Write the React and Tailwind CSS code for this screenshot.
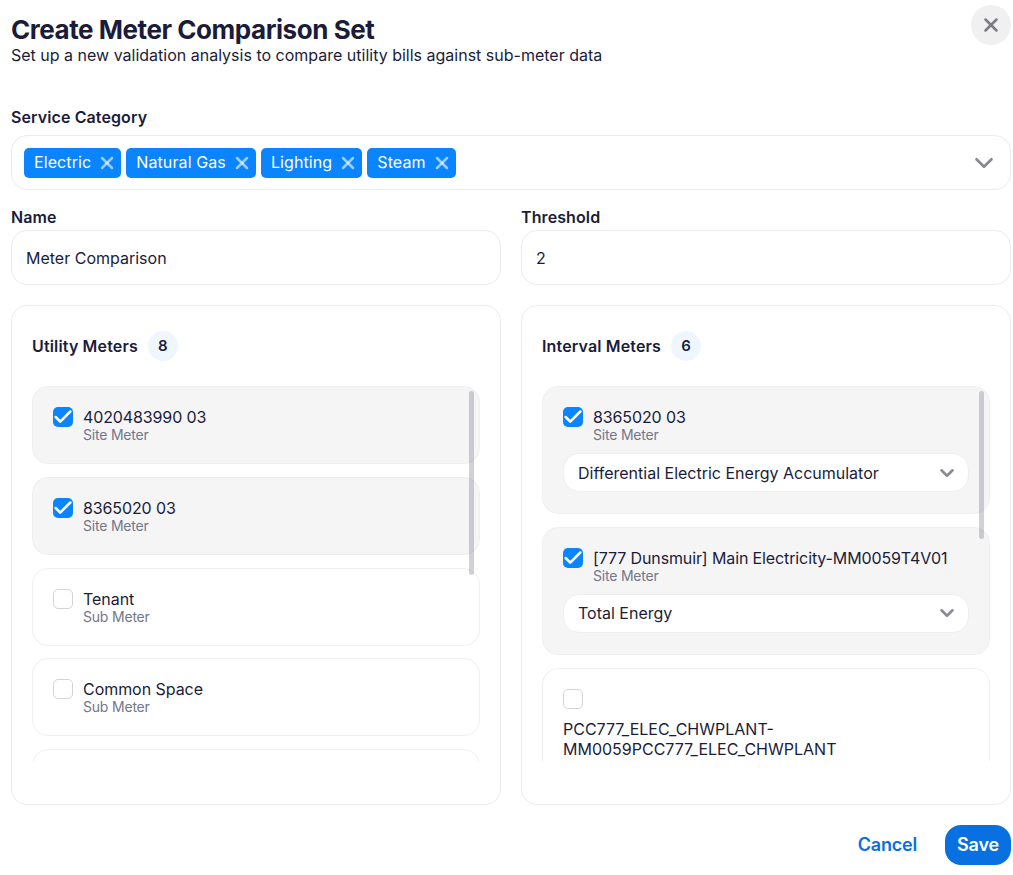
import { X, ChevronDown, Check } from 'lucide-react';

const utilityMeters = [
  { id: 'u1', name: '4020483990 03', type: 'Site Meter', checked: true, numeric: true },
  { id: 'u2', name: '8365020 03', type: 'Site Meter', checked: true, numeric: true },
  { id: 'u3', name: 'Tenant', type: 'Sub Meter' },
  { id: 'u4', name: 'Common Space', type: 'Sub Meter' },
  { id: 'u5', name: '', type: '' },
];

const intervalMeters = [
  { id: 'i1', name: '8365020 03', type: 'Site Meter', checked: true, numeric: true, point: 'Differential Electric Energy Accumulator' },
  { id: 'i2', name: '[777 Dunsmuir] Main Electricity-MM0059T4V01', type: 'Site Meter', checked: true, numeric: true, point: 'Total Energy' },
];

const tags = ['Electric', 'Natural Gas', 'Lighting', 'Steam'];

function Checkbox({ checked }) {
  if (checked) {
    return (
      <span className="flex h-5 w-5 shrink-0 items-center justify-center rounded-[5px] bg-[#0a84ff]">
        <Check className="h-[22px] w-[22px] shrink-0 text-white" strokeWidth={2.8} />
      </span>
    );
  }
  return <span className="block h-5 w-5 shrink-0 rounded-[5px] border border-[#d4d4d8] bg-white" />;
}

function MeterCard({ meter }) {
  return (
    <div className={`rounded-2xl border px-5 pt-5 pb-5 ${meter.checked ? 'border-[#efefef] bg-[#f5f5f5]' : 'border-[#efefef] bg-white'}`}>
      <div className="flex gap-[10px]">
        <Checkbox checked={meter.checked} />
        <div className="min-w-0">
          <p className={`h-5 text-base leading-5 text-[#1b1c3a] ${meter.numeric ? 'tracking-[-0.12px]' : 'tracking-[-0.05px]'}`}>{meter.name}</p>
          <p className="h-4 text-sm leading-4 tracking-[-0.2px] text-[#74768a]">{meter.type}</p>
        </div>
      </div>
      {meter.point && (
        <div className="mt-[10px] mb-[1px] flex h-[39px] items-center justify-between rounded-2xl border border-[#efefef] bg-white pr-[10px] pl-[14px]">
          <span className="text-base text-[#1b1c3a]">{meter.point}</span>
          <ChevronDown className="h-[22px] w-[22px] text-[#8a8a94]" strokeWidth={2.8} />
        </div>
      )}
    </div>
  );
}

function Panel({ title, count, thumbClass, children }) {
  return (
    <div className="h-[500px] rounded-2xl border border-[#ececec] bg-white px-5 pt-[25px]">
      <div className="flex h-[30px] items-center gap-[10px]">
        <h3 className="text-base font-semibold tracking-[0.15px] text-[#1b1c3a]">{title}</h3>
        <span className="flex h-[30px] w-[30px] items-center justify-center rounded-full bg-[#eff6fe] text-[15px] font-semibold text-[#1b1c3a]">{count}</span>
      </div>
      <div className="relative mt-[25px] h-[375px] overflow-hidden">
        <div className="flex flex-col gap-[12.75px]">{children}</div>
        <div className={`absolute top-[5px] right-[6px] w-[5px] rounded-full bg-[#1b1c3a]/20 ${thumbClass}`} />
      </div>
    </div>
  );
}

export default function App() {
  return (
    <div className="min-h-screen w-full bg-white font-['Inter',sans-serif] text-[#1b1c3a]">
      <div className="w-[1011px] pl-[11px] pt-[5px]">
        {/* Header */}
        <div className="flex items-start justify-between">
          <div className="pt-[8px]">
            <h2 className="text-[26px] leading-[34px] font-bold tracking-[-0.45px]">Create Meter Comparison Set</h2>
            <p className="text-base leading-[16px]">Set up a new validation analysis to compare utility bills against sub-meter data</p>
          </div>
          <button className="flex h-10 w-10 items-center justify-center rounded-full bg-[#f0f0f0] text-[#7c7c84]">
            <X className="h-[22px] w-[22px]" strokeWidth={2.8} />
          </button>
        </div>

        {/* Service category */}
        <label className="mt-[42px] block text-base leading-6 font-semibold tracking-[0.1px]">Service Category</label>
        <div className="mt-[6px] flex h-[55px] items-center justify-between rounded-2xl border border-[#ececec] pr-[11px] pl-3">
          <div className="flex gap-[5px]">
            {tags.map((tag) => (
              <span key={tag} className="flex h-[30px] items-center gap-[6px] rounded-[5px] bg-[#0a84ff] pr-[4px] pl-[10px] text-base tracking-[0.1px] text-white">
                <span className="-mt-[2px]">{tag}</span>
                <X className="h-5 w-5 text-white/60" strokeWidth={3} />
              </span>
            ))}
          </div>
          <ChevronDown className="h-[30px] w-[30px] text-[#8a8a94]" strokeWidth={2.2} />
        </div>

        {/* Name and threshold */}
        <div className="mt-[15px] grid grid-cols-2 gap-5">
          <div>
            <label className="block text-base leading-6 font-semibold tracking-[0.1px]">Name</label>
            <div className="mt-[1px] flex h-[55px] items-center rounded-2xl border border-[#ececec] px-[14px] text-base">Meter Comparison</div>
          </div>
          <div>
            <label className="block text-base leading-6 font-semibold tracking-[0.1px]">Threshold</label>
            <div className="mt-[1px] flex h-[55px] items-center rounded-2xl border border-[#ececec] px-[14px] text-base">2</div>
          </div>
        </div>

        {/* Meter lists */}
        <div className="mt-5 grid grid-cols-2 gap-5">
          <Panel title="Utility Meters" count={8} thumbClass="h-[184px]">
            {utilityMeters.map((meter) => (
              <MeterCard key={meter.id} meter={meter} />
            ))}
          </Panel>
          <Panel title="Interval Meters" count={6} thumbClass="h-[148px]">
            {intervalMeters.map((meter) => (
              <MeterCard key={meter.id} meter={meter} />
            ))}
            <div className="rounded-2xl border border-[#efefef] bg-white px-5 pt-5 pb-5">
              <Checkbox />
              <p className="mt-[10px] text-base leading-5">PCC777_ELEC_CHWPLANT-<br />MM0059PCC777_ELEC_CHWPLANT</p>
            </div>
          </Panel>
        </div>

        {/* Footer */}
        <div className="mt-5 flex items-center justify-end gap-7">
          <button className="text-lg font-semibold tracking-[-0.2px] text-[#0870e0]">Cancel</button>
          <button className="h-10 w-[66px] rounded-2xl bg-[#0870e0] text-lg font-semibold tracking-[-0.2px] text-white">Save</button>
        </div>
      </div>
    </div>
  );
}
